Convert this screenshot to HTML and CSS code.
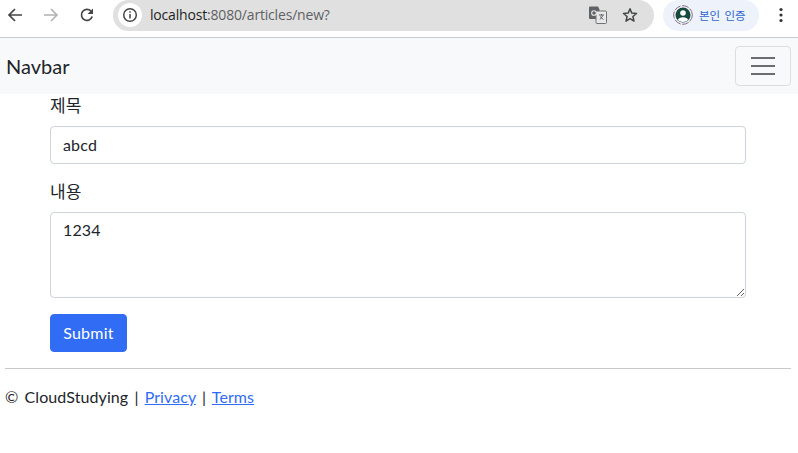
FILE: index.html
```html
<!DOCTYPE html>
<html lang="ko">
<head>
<meta charset="utf-8">
<title>New article</title>
<link rel="stylesheet" href="styles.css">
</head>
<body>
<header class="chrome">
  <svg class="nav-icon icon-back" width="16" height="16" viewBox="0 0 16 16"><path d="M15 8H2.5M8 2L2 8l6 6" fill="none" stroke="#444746" stroke-width="1.7"/></svg>
  <svg class="nav-icon icon-forward" width="16" height="16" viewBox="0 0 16 16"><path d="M1 8h12.5M8 2l6 6-6 6" fill="none" stroke="#b0b2b3" stroke-width="1.6"/></svg>
  <svg class="nav-icon icon-reload" width="16" height="16" viewBox="0 0 16 16"><path d="M13.2 9.6A5.5 5.5 0 1 1 12 4.2" fill="none" stroke="#444746" stroke-width="1.7"/><path d="M14 1.5V7H8.5z" fill="#444746"/></svg>
  <div class="omnibox">
    <span class="site-badge">
      <svg width="16" height="16" viewBox="0 0 16 16"><circle cx="8" cy="8" r="6.3" fill="none" stroke="#444746" stroke-width="1.5"/><path d="M8 7v4.6M8 4.2v1.6" stroke="#444746" stroke-width="1.5"/></svg>
    </span>
    <span class="url"><span class="url-host">localhost</span>:8080/articles/new?</span>
    <svg class="omni-icon icon-translate" width="18" height="18" viewBox="0 0 18 18"><path d="M0 1.5a1 1 0 0 1 1-1h8l1.5 3V13H1a1 1 0 0 1-1-1z" fill="#5f6368"/><rect x="7" y="5" width="10.500" height="12.500" rx="1" fill="#e8e8e8" stroke="#6f7274"/><circle cx="5" cy="7" r="2.300" fill="none" stroke="#e8e8e8" stroke-width="1.100"/><path d="M10 9h5M12.500 8v1.500M14 9.500l-3 4M11 10.500l3.500 3" fill="none" stroke="#5f6368"/></svg>
    <svg class="omni-icon icon-star" width="16" height="16" viewBox="0 0 16 16"><path d="M8 1.800l1.800 4.300 4.700.4-3.600 3 1.100 4.600L8 11.700l-4 2.400 1.100-4.600-3.600-3 4.700-.4z" fill="none" stroke="#444746" stroke-width="1.500" stroke-linejoin="round"/></svg>
  </div>
  <div class="profile">
    <svg class="avatar" width="20" height="20" viewBox="0 0 20 20"><circle cx="10" cy="10" r="9.300" fill="none" stroke="#8d6b84" stroke-width="1" stroke-dasharray="7 1.500"/><circle cx="10" cy="10" r="7.500" fill="#17493f"/><circle cx="10" cy="8" r="2.800" fill="#fff"/><path d="M4.800 15a5.500 4 0 0 1 10.400 0A7.500 7.500 0 0 1 4.800 15z" fill="#fff"/></svg>
    <span class="profile-name">본인 인증</span>
  </div>
  <svg class="menu-dots" width="4" height="16" viewBox="0 0 4 16"><circle cx="2" cy="2.500" r="1.600" fill="#333"/><circle cx="2" cy="8" r="1.600" fill="#333"/><circle cx="2" cy="13.500" r="1.600" fill="#333"/></svg>
</header>

<nav class="navbar">
  <a class="brand" href="#">Navbar</a>
  <button class="toggler" type="button" aria-label="Toggle navigation">
    <span class="toggler-bar"></span>
    <span class="toggler-bar"></span>
    <span class="toggler-bar"></span>
  </button>
</nav>

<div class="page">
  <form class="article-form">
    <div class="field">
      <label class="field-label" for="title">제목</label>
      <input class="control" id="title" type="text" value="abcd">
    </div>
    <div class="field">
      <label class="field-label" for="content">내용</label>
      <textarea class="control control-area" id="content">1234</textarea>
    </div>
    <button class="submit" type="button">Submit</button>
  </form>
  <hr class="rule">
  <p class="footer">© CloudStudying | <a href="#">Privacy</a> | <a href="#">Terms</a></p>
</div>
</body>
</html>
```
FILE: styles.css
```css
* { box-sizing: border-box; }
html, body { margin: 0; padding: 0; }
body {
  background: #fff;
  color: #212529;
  font-family: "Lato", "Noto Sans CJK KR", sans-serif;
  font-size: 16px;
  line-height: 24px;
  overflow: hidden;
}
.chrome {
  height: 38px;
  display: flex;
  align-items: center;
  border-bottom: 1px solid #c9cacb;
  background: #fff;
  padding-bottom: 7px;
  padding-left: 7px;
}
.nav-icon { flex: none; }
.icon-back { margin-right: 20px; }
.icon-forward { margin-right: 20px; }
.icon-reload { margin-right: 18px; }
.omnibox {
  width: 541px;
  height: 31px;
  background: #e0e0e0;
  border-radius: 16px;
  display: flex;
  align-items: center;
  padding-left: 5px;
  flex: none;
}
.site-badge {
  width: 24px;
  height: 24px;
  border-radius: 50%;
  background: #fff;
  display: flex;
  align-items: center;
  justify-content: center;
  margin-right: 8px;
}
.url {
  font-size: 14px;
  color: #5f6163;
  flex: 1;
  line-height: 20px;
  font-family: "Open Sans", sans-serif;
  letter-spacing: -0.18px;
}
.url-host { color: #1f1f1f; }
.omni-icon { flex: none; }
.icon-translate { margin-right: 15px; }
.icon-star { margin-right: 16px; }
.profile {
  width: 96px;
  height: 31px;
  margin-left: 9px;
  background: #edf2fb;
  border-radius: 16px;
  display: flex;
  align-items: center;
  padding-left: 10px;
  flex: none;
}
.avatar { flex: none; margin-right: 6px; }
.profile-name {
  font-size: 11.5px;
  line-height: 16px;
  color: #2f66cc;
  white-space: nowrap;
  font-family: "Noto Sans CJK KR", sans-serif;
  word-spacing: 1px;
}
.menu-dots { margin-left: 20px; flex: none; }
.navbar {
  height: 56px;
  background: #f8f9fa;
  display: flex;
  align-items: center;
  justify-content: space-between;
  padding: 0 7px 0 6px;
}
.brand {
  font-size: 20px;
  line-height: 30px;
  color: #212529;
  text-decoration: none;
  font-weight: 400;
}
.toggler {
  width: 56px;
  height: 40px;
  padding: 0;
  background: transparent;
  border: 1px solid #dcdedf;
  border-radius: 4px;
  display: flex;
  flex-direction: column;
  align-items: center;
  justify-content: center;
  gap: 6px;
}
.toggler-bar {
  width: 24px;
  height: 2px;
  background: #6a6d70;
}
.page { padding: 0 7px 0 5px; }
.article-form { padding: 0 45px; }
.field { margin-bottom: 16px; }
.field-label {
  display: block;
  margin-bottom: 10px;
  line-height: 22px;
  font-size: 17px;
  font-family: "Noto Sans CJK KR", sans-serif;
}
.control {
  display: block;
  width: 100%;
  height: 38px;
  padding: 5px 12px 7px;
  font: inherit;
  color: #212529;
  background: #fff;
  border: 1px solid #ced4da;
  border-radius: 4px;
  outline: none;
  letter-spacing: 0.15px;
}
.control-area { height: 86px; resize: vertical; }
.submit {
  display: block;
  width: 77px;
  height: 38px;
  padding: 0;
  font: inherit;
  color: #fff;
  background: #316cf4;
  border: 1px solid #316cf4;
  border-radius: 4px;
  letter-spacing: 0.25px;
}
.rule {
  margin: 16px 0;
  height: 1px;
  border: 0;
  background: #c8c9ca;
}
.footer { margin: 0; word-spacing: 2px; letter-spacing: 0.08px; }
.footer a { color: #316cf4; text-decoration: underline; }
```
